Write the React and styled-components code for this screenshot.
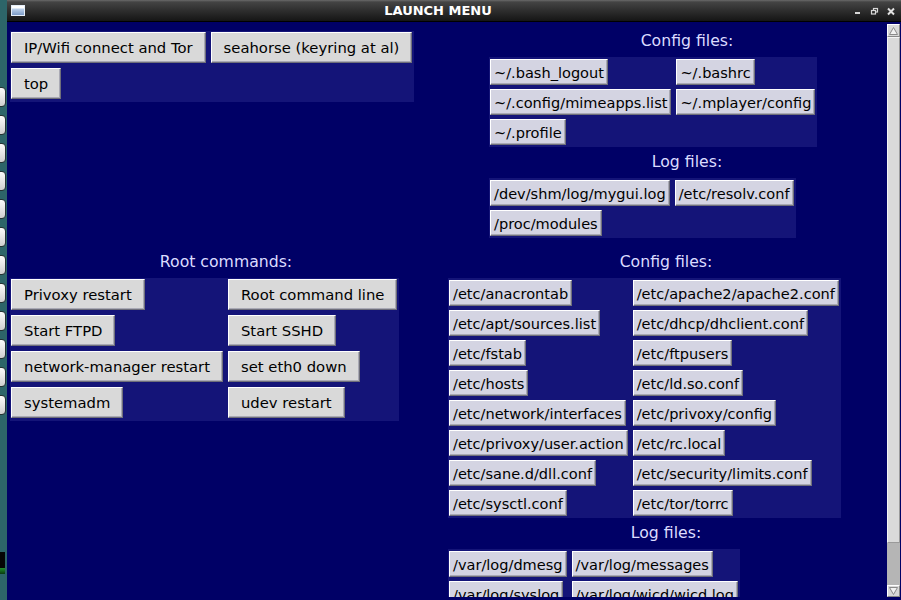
import React from 'react'
import styled, { createGlobalStyle } from 'styled-components'

const Global = createGlobalStyle`
  html, body {
    margin: 0;
    padding: 0;
    background: #2d6569;
    overflow: hidden;
  }
  #root {
    width: 901px;
    height: 600px;
  }
`

const Screen = styled.div`
  display: flex;
  width: 901px;
  height: 600px;
  overflow: hidden;
  font-family: "DejaVu Sans", Verdana, sans-serif;
`

const Desktop = styled.div`
  width: 7px;
  flex-shrink: 0;
  background: #2d6569;
  display: flex;
  flex-direction: column;
  overflow: hidden;
`

const IconColumn = styled.div`
  display: flex;
  flex-direction: column;
  gap: 8px;
  padding-top: 87px;
`

const DesktopIcon = styled.div`
  width: 16px;
  height: 20px;
  margin-left: -10px;
  box-sizing: border-box;
  border: 1px solid #263232;
  border-radius: 4px;
  background: linear-gradient(#fbfbfb, #cfcfcf);
`

const Monitor = styled.div`
  margin-top: 137px;
  width: 5px;
  height: 22px;
  background: linear-gradient(#050505 0, #050505 75%, #1f8a2a 75%, #0a3a0e 100%);
`

const Window = styled.div`
  flex: 1;
  display: flex;
  flex-direction: column;
  min-width: 0;
`

const TitleBar = styled.div`
  height: 22px;
  box-sizing: border-box;
  flex-shrink: 0;
  display: flex;
  align-items: center;
  padding: 0 2px 0 4px;
  border-bottom: 1px solid #000;
  background: linear-gradient(#6a6a6a 0, #444 2px, #2e2e2e 50%, #151515 100%);
`

const WinIcon = styled.div`
  width: 14px;
  height: 11px;
  box-sizing: border-box;
  border: 1px solid #e6eef8;
  background: linear-gradient(#ffffff 0, #ffffff 2px, #bcd0ea 3px, #7c9bc7 100%);
`

const Title = styled.div`
  flex: 1;
  text-align: center;
  color: #fff;
  font-weight: bold;
  font-size: 13px;
  line-height: 21px;
`

const Controls = styled.div`
  display: flex;
  height: 21px;
`

const Body = styled.div`
  flex: 1;
  display: flex;
  min-height: 0;
`

const Content = styled.div`
  flex: 1;
  background: #000066;
  padding: 4px 0 0 3px;
  overflow: hidden;
  box-sizing: border-box;
  border-bottom: 3px solid #000066;
`

const Layout = styled.div`
  display: grid;
  grid-template-columns: 435px auto;
  row-gap: 9px;
  align-items: start;
`

const Section = styled.div`
  display: flex;
  flex-direction: column;
  align-items: flex-start;
  margin-left: ${p => p.$ml || 0}px;
  padding-top: ${p => p.$pt || 0}px;
`

const Heading = styled.div`
  width: ${p => p.$w}px;
  text-align: center;
  color: #dcdcff;
  font-size: 15.7px;
  line-height: 22px;
  margin: 4px 0 5px;
`

const Panel = styled.div`
  display: grid;
  grid-template-columns: repeat(2, max-content);
  justify-items: start;
  column-gap: 5px;
  row-gap: ${p => (p.$kind === 'cmd' ? 5 : 4)}px;
  padding: ${p => (p.$kind === 'cmd' ? '1px 2px 3px 1px' : '2px 2px 2px 1px')};
  background: #141478;
`

const Btn = styled.button`
  height: ${p => (p.$kind === 'cmd' ? 31 : 26)}px;
  padding: 0 ${p => (p.$kind === 'cmd' ? 12 : 3)}px;
  box-sizing: border-box;
  font-family: "DejaVu Sans", Verdana, sans-serif;
  font-size: ${p => (p.$kind === 'cmd' ? 14.8 : 14.55)}px;
  color: #000;
  white-space: nowrap;
  background: ${p => (p.$kind === 'cmd' ? '#d9d9d9' : '#d4d4e2')};
  border: 1px solid;
  border-color: #ffffff #6f6f7a #6f6f7a #ffffff;
  box-shadow: inset -1px -1px 0 #a9a9b4;
  cursor: default;
`

const Scrollbar = styled.div`
  width: 14px;
  flex-shrink: 0;
  box-sizing: border-box;
  display: flex;
  flex-direction: column;
  padding: 2px 1px 3px 0;
  background: #000066;
`

const ArrowBox = styled.div`
  height: ${p => p.$h}px;
  flex-shrink: 0;
  background: #d8d8d8;
  box-sizing: border-box;
  border: 1px solid;
  border-color: #fff #888 #888 #fff;
  display: flex;
  align-items: center;
  justify-content: center;
`

const Thumb = styled.div`
  flex: 1;
  background: #dadada;
  box-sizing: border-box;
  border: 1px solid;
  border-color: #f4f4f4 #9a9a9a #9a9a9a #f4f4f4;
`

const Track = styled.div`
  height: 42px;
  flex-shrink: 0;
  background: #b5b5b5;
`

const userButtons = ['IP/Wifi connect and Tor', 'seahorse (keyring at al)', 'top']
const userConfig = ['~/.bash_logout', '~/.bashrc', '~/.config/mimeapps.list', '~/.mplayer/config', '~/.profile']
const userLogs = ['/dev/shm/log/mygui.log', '/etc/resolv.conf', '/proc/modules']
const rootCommands = [
  'Privoxy restart', 'Root command line',
  'Start FTPD', 'Start SSHD',
  'network-manager restart', 'set eth0 down',
  'systemadm', 'udev restart'
]
const sysConfig = [
  '/etc/anacrontab', '/etc/apache2/apache2.conf',
  '/etc/apt/sources.list', '/etc/dhcp/dhclient.conf',
  '/etc/fstab', '/etc/ftpusers',
  '/etc/hosts', '/etc/ld.so.conf',
  '/etc/network/interfaces', '/etc/privoxy/config',
  '/etc/privoxy/user.action', '/etc/rc.local',
  '/etc/sane.d/dll.conf', '/etc/security/limits.conf',
  '/etc/sysctl.conf', '/etc/tor/torrc'
]
const sysLogs = ['/var/log/dmesg', '/var/log/messages', '/var/log/syslog', '/var/log/wicd/wicd.log']

const ButtonPanel = ({ kind, items }) => (
  <Panel $kind={kind}>
    {items.map(t => <Btn key={t} $kind={kind}>{t}</Btn>)}
  </Panel>
)

export default function App() {
  return (
    <>
      <Global />
      <Screen>
        <Desktop>
          <IconColumn>
            {Array.from({ length: 12 }).map((_, i) => <DesktopIcon key={i} />)}
          </IconColumn>
          <Monitor />
        </Desktop>
        <Window>
          <TitleBar>
            <WinIcon />
            <Title>LAUNCH MENU</Title>
            <Controls>
              <svg width="16" height="21" viewBox="0 0 16 21">
                <rect x="4" y="12" width="5" height="2" fill="#d8d8d8" />
              </svg>
              <svg width="16" height="21" viewBox="0 0 16 21">
                <rect x="6.5" y="8.5" width="4" height="3.5" fill="none" stroke="#d8d8d8" strokeWidth="1.2" />
                <rect x="4.5" y="10.5" width="4" height="3.5" fill="#2a2a2a" stroke="#d8d8d8" strokeWidth="1.2" />
              </svg>
              <svg width="16" height="21" viewBox="0 0 16 21">
                <path d="M5 8.5 L11 14.5 M11 8.5 L5 14.5" stroke="#e0e0e0" strokeWidth="2" />
              </svg>
            </Controls>
          </TitleBar>
          <Body>
            <Content>
              <Layout>
                <Section $pt={5}>
                  <ButtonPanel kind="cmd" items={userButtons} />
                </Section>
                <Section $ml={44}>
                  <Heading $w={396}>Config files:</Heading>
                  <ButtonPanel kind="file" items={userConfig} />
                  <Heading $w={396}>Log files:</Heading>
                  <ButtonPanel kind="file" items={userLogs} />
                </Section>
                <Section>
                  <Heading $w={432}>Root commands:</Heading>
                  <ButtonPanel kind="cmd" items={rootCommands} />
                </Section>
                <Section $ml={3}>
                  <Heading $w={436}>Config files:</Heading>
                  <ButtonPanel kind="file" items={sysConfig} />
                  <Heading $w={436}>Log files:</Heading>
                  <ButtonPanel kind="file" items={sysLogs} />
                </Section>
              </Layout>
            </Content>
            <Scrollbar>
              <ArrowBox $h={13}>
                <svg width="9" height="8" viewBox="0 0 9 8">
                  <polygon points="4.5,0.5 8.5,7.5 0.5,7.5" fill="#f2f2f2" stroke="#8a8a8a" strokeWidth="1" />
                </svg>
              </ArrowBox>
              <Thumb />
              <Track />
              <ArrowBox $h={12}>
                <svg width="9" height="8" viewBox="0 0 9 8">
                  <polygon points="0.5,0.5 8.5,0.5 4.5,7.5" fill="#f2f2f2" stroke="#8a8a8a" strokeWidth="1" />
                </svg>
              </ArrowBox>
            </Scrollbar>
          </Body>
        </Window>
      </Screen>
    </>
  )
}
